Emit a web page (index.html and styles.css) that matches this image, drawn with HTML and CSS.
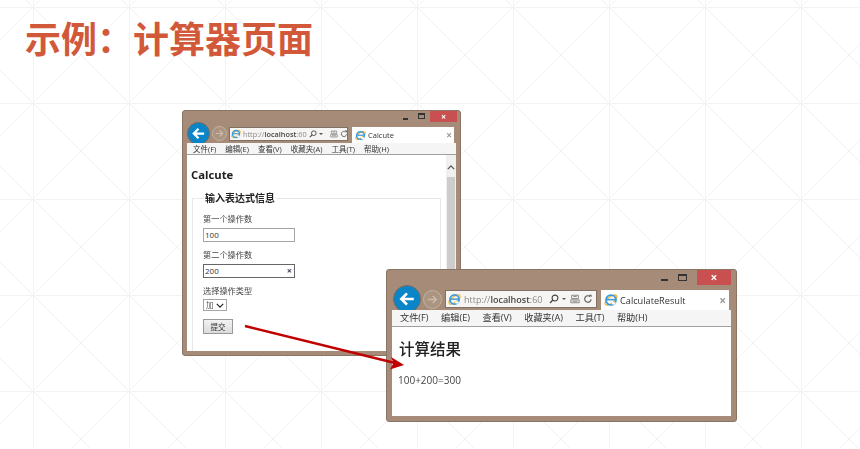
FILE: index.html
```html
<!DOCTYPE html>
<html lang="zh-CN">

<head>
    <meta charset="UTF-8" />
    <title>示例&#xFF1A;计算器页面</title>
    <link rel="stylesheet" href="styles.css">
</head>

<body>
    <h1 class="title">示例<span class="title-colon">&#xFF1A;</span>计算器页面</h1>

    <!-- Shared icon shapes -->
    <svg width="0" height="0" class="defs" aria-hidden="true">
        <symbol id="ie" viewBox="0 0 16 16">
            <ellipse cx="8" cy="8" rx="8" ry="3.6" transform="rotate(-38 8 8)" fill="none" stroke="#f2b632" stroke-width="1.5" />
            <circle cx="8" cy="8" r="5.6" fill="none" stroke="#3a9ad9" stroke-width="2.2" />
            <path d="M3.5 7.6h9" stroke="#3a9ad9" stroke-width="1.8" />
            <path d="M9 10.5h4.5l-1 2.5H9z" fill="#fff" />
        </symbol>
        <symbol id="arrow-left" viewBox="0 0 24 24">
            <path d="M21 12H5M12 4.5 4.5 12l7.5 7.5" fill="none" stroke="#fff" stroke-width="3.6" />
        </symbol>
        <symbol id="arrow-right" viewBox="0 0 24 24">
            <path d="M4 12h15M12.5 5.5 19 12l-6.500 6.500" fill="none" stroke="#cbbcae" stroke-width="2.6" />
        </symbol>
        <symbol id="search" viewBox="0 0 12 12">
            <circle cx="7.200" cy="4.800" r="3.500" fill="none" stroke="#444" stroke-width="1.300" />
            <path d="M4.700 7.300 1.200 10.800" stroke="#444" stroke-width="1.600" />
        </symbol>
        <symbol id="compat" viewBox="0 0 12 12">
            <path d="M2 1.500h8v4H2zM1 7h10v3.500H1zM4 3h4M3 8.700h6" fill="none" stroke="#777" stroke-width="1" />
        </symbol>
        <symbol id="refresh" viewBox="0 0 12 12">
            <path d="M9.800 6.500A3.900 3.900 0 1 1 8.500 3" fill="none" stroke="#555" stroke-width="1.300" />
            <path d="M7 .8h3.200V4z" fill="#555" />
        </symbol>
    </svg>

    <!-- Form window -->
    <section class="win win-form">
        <div class="win-caption">
            <span class="cap-min"></span>
            <span class="cap-max"></span>
            <span class="cap-close">×</span>
        </div>
        <div class="win-toolbar">
            <span class="nav-back"><svg><use href="#arrow-left" /></svg></span>
            <span class="nav-forward"><svg><use href="#arrow-right" /></svg></span>
            <div class="address">
                <svg class="ie"><use href="#ie" /></svg>
                <span class="url">http://<b>localhost</b>:60</span>
                <svg class="tool"><use href="#search" /></svg>
                <span class="caret"></span>
                <svg class="tool tool-compat"><use href="#compat" /></svg>
                <svg class="tool"><use href="#refresh" /></svg>
            </div>
            <div class="tab">
                <svg class="ie"><use href="#ie" /></svg>
                <span class="tab-name">Calcute</span>
                <span class="tab-close">×</span>
            </div>
        </div>
        <ul class="menu">
            <li>文件(F)</li>
            <li>编辑(E)</li>
            <li>查看(V)</li>
            <li>收藏夹(A)</li>
            <li>工具(T)</li>
            <li>帮助(H)</li>
        </ul>
        <div class="form-view">
            <div class="form-page">
                <h2 class="form-title">Calcute</h2>
                <fieldset class="form-box">
                    <legend>输入表达式信息</legend>
                    <label>第一个操作数</label>
                    <div class="field">100</div>
                    <label>第二个操作数</label>
                    <div class="field field-active">200<span class="field-clear">×</span></div>
                    <label>选择操作类型</label>
                    <div class="select">加<svg viewBox="0 0 10 6"><path d="M1 1l4 4 4-4" fill="none" stroke="#222" stroke-width="1.500" /></svg></div>
                    <button class="submit" type="button">提交</button>
                </fieldset>
            </div>
            <div class="scrollbar">
                <svg class="scroll-up" viewBox="0 0 10 6"><path d="M1 5l4-4 4 4" fill="none" stroke="#555" stroke-width="1.600" /></svg>
                <div class="scroll-thumb"></div>
            </div>
        </div>
    </section>

    <!-- Result window -->
    <section class="win win-result">
        <div class="win-caption">
            <span class="cap-min"></span>
            <span class="cap-max"></span>
            <span class="cap-close">×</span>
        </div>
        <div class="win-toolbar">
            <span class="nav-back"><svg><use href="#arrow-left" /></svg></span>
            <span class="nav-forward"><svg><use href="#arrow-right" /></svg></span>
            <div class="address">
                <svg class="ie"><use href="#ie" /></svg>
                <span class="url">http://<b>localhost</b>:60</span>
                <svg class="tool"><use href="#search" /></svg>
                <span class="caret"></span>
                <svg class="tool tool-compat"><use href="#compat" /></svg>
                <svg class="tool"><use href="#refresh" /></svg>
            </div>
            <div class="tab">
                <svg class="ie"><use href="#ie" /></svg>
                <span class="tab-name">CalculateResult</span>
                <span class="tab-close">×</span>
            </div>
        </div>
        <ul class="menu">
            <li>文件(F)</li>
            <li>编辑(E)</li>
            <li>查看(V)</li>
            <li>收藏夹(A)</li>
            <li>工具(T)</li>
            <li>帮助(H)</li>
        </ul>
        <div class="result-view">
            <h2 class="result-title">计算结果</h2>
            <p class="result-text">100+200=300</p>
        </div>
    </section>

    <svg class="link-arrow" width="860" height="449" viewBox="0 0 860 449" aria-hidden="true">
        <path d="M245 326 395 363" stroke="#c00000" stroke-width="2.500" fill="none" />
        <path d="M404 365 391 357 393.500 363 390 369.500z" fill="#c00000" />
    </svg>
</body>

</html>
```

FILE: styles.css
```css
:root {
    --frame: #a68c78;
    --frame-edge: #8a7565;
    --line: #f3f3f3;
    --text: #333;
    --close: #c95050;
}

* {
    box-sizing: border-box;
}

/* Slide background: a 96px square grid with an X in every square */
body {
    position: relative;
    width: 860px;
    height: 449px;
    margin: 0;
    overflow: hidden;
    font-family: "Open Sans", "Noto Sans CJK SC", sans-serif;
    color: var(--text);
    background-color: #fff;
    background-image:
        linear-gradient(to right, var(--line) 1px, transparent 1px),
        linear-gradient(to bottom, var(--line) 1px, transparent 1px),
        linear-gradient(45deg, transparent calc(50% - 0.6px), var(--line) 50%, transparent calc(50% + 0.6px)),
        linear-gradient(-45deg, transparent calc(50% - 0.6px), var(--line) 50%, transparent calc(50% + 0.6px));
    background-size: 96px 96px;
    background-position: 33px 7px;
}

.defs {
    position: absolute;
}

.title {
    margin: 0;
    padding: 11px 0 0 25px;
    font-family: "Noto Sans CJK SC", sans-serif;
    font-size: 36px;
    line-height: 52px;
    font-weight: 700;
    color: #d2583a;
}

.title-colon {
    font-family: "Noto Sans CJK TC", sans-serif;
}

/* Browser window */
.win {
    position: absolute;
    display: flex;
    flex-direction: column;
    background: var(--frame);
    border: 1px solid var(--frame-edge);
    border-radius: 3px;
    filter: blur(0.3px);
}

.win svg {
    display: block;
    width: 100%;
    height: 100%;
}

.win-caption {
    display: flex;
    align-items: flex-start;
    justify-content: flex-end;
}

.cap-min {
    background: #333;
}

.cap-max {
    border: 1px solid #333;
    border-top-width: 2px;
}

.cap-close {
    display: flex;
    align-items: center;
    justify-content: center;
    background: var(--close);
    color: #fff;
    font-weight: 700;
}

.win-toolbar {
    display: flex;
    align-items: flex-start;
}

.nav-back {
    flex: none;
    border-radius: 50%;
    background: #0a85c7;
    border: 1px solid #7a6a5c;
}

.nav-forward {
    flex: none;
    border-radius: 50%;
    border: 1px solid #c2b2a3;
    background: #ab9480;
}

.address {
    display: flex;
    align-items: center;
    background: #f7f5f3;
    border: 1px solid #7f7265;
    overflow: hidden;
}

.win .ie {
    flex: none;
}

.url {
    color: #8a8a8a;
    white-space: nowrap;
}

.url b {
    color: #444;
    font-weight: 600;
}

.win .tool {
    flex: none;
}

.caret {
    flex: none;
    width: 0;
    height: 0;
    border-style: solid;
    border-color: #555 transparent transparent;
}

.tab {
    display: flex;
    align-items: center;
    background: #fff;
}

.tab-name {
    flex: 1;
    color: #333;
    white-space: nowrap;
}

.tab-close {
    color: #999;
    font-weight: 700;
}

.menu {
    display: flex;
    margin: 0;
    list-style: none;
    background: #f5f5f5;
    border-bottom: 1px solid #a0a0a0;
    color: #333;
}

/* Form window sizes */
.win-form {
    left: 182px;
    top: 110px;
    width: 279px;
    height: 246px;
    padding: 0 4px 4px;
}

.win-form .win-caption {
    height: 12px;
}

.win-form .cap-min {
    width: 5px;
    height: 2px;
    margin: 7px 10px 0 0;
}

.win-form .cap-max {
    width: 7px;
    height: 6px;
    margin: 2px 5px 0 0;
}

.win-form .cap-close {
    width: 27px;
    height: 11px;
    margin-right: -1px;
    font-size: 9px;
}

.win-form .win-toolbar {
    height: 20px;
    margin-left: 0;
}

.win-form .nav-back {
    width: 23px;
    height: 23px;
    margin-top: -1px;
    padding: 3px;
}

.win-form .nav-forward {
    width: 15px;
    height: 15px;
    margin: 3px 0 0 2px;
    padding: 1px;
}

.win-form .address {
    width: 119px;
    height: 14px;
    margin: 4px 0 0 2px;
    padding: 0 1px;
    gap: 2px;
    font-size: 7.300px;
}

.win-form .address .ie {
    width: 10px;
    height: 10px;
}

.win-form .tool {
    width: 8px;
    height: 8px;
}

.win-form .tool-compat {
    margin-left: 5px;
}

.win-form .url {
    flex: 0 0 64px;
    min-width: 0;
}

.win-form .caret {
    border-width: 2px 2px 0;
}

.win-form .tab {
    width: 102px;
    height: 16px;
    margin: 4px 0 0 4px;
    padding: 0 2px 0 3px;
    gap: 2px;
    font-size: 7.500px;
}

.win-form .tab .ie {
    width: 11px;
    height: 11px;
}

.win-form .tab-close {
    font-size: 10px;
}

.win-form .menu {
    height: 12px;
    margin: 0;
    padding: 0 0 0 6px;
    gap: 9px;
    font-size: 7.500px;
    line-height: 12px;
}

.form-view {
    display: flex;
    flex: 1;
    min-height: 0;
    background: #fff;
    overflow: hidden;
}

.form-page {
    flex: 1;
    min-width: 0;
    padding: 12px 5px 0 4px;
}

.form-title {
    margin: 0 0 10px;
    font-size: 11.300px;
    line-height: 16px;
    font-weight: 700;
    color: #222;
}

.form-box {
    height: 200px;
    margin: 0 0 0 1px;
    padding: 9px 10px 0;
    border: 1px solid #e8e8e8;
}

.form-box legend {
    margin-left: 1px;
    padding: 0 1px;
    font-size: 10px;
    line-height: 11px;
    font-weight: 700;
    color: #222;
}

.form-box label {
    display: block;
    height: 14px;
    font-size: 8.200px;
    line-height: 12px;
    color: #444;
}

.field {
    position: relative;
    width: 92px;
    height: 14px;
    margin: 1px 0 7px;
    padding-left: 1px;
    border: 1px solid #a5a5a5;
    font-size: 8px;
    line-height: 12px;
    color: #333;
    background: #fff;
}

.field-active {
    border-color: #666;
}

.field-clear {
    position: absolute;
    right: 2px;
    top: 0;
    font-size: 9px;
    font-weight: 700;
    color: #444;
}

.select {
    display: flex;
    align-items: center;
    justify-content: space-between;
    width: 24px;
    height: 12px;
    margin: 0 0 8px;
    padding: 0 2px;
    border: 1px solid #a5a5a5;
    font-size: 7.500px;
    line-height: 10px;
    color: #555;
}

.win .select svg {
    width: 8px;
    height: 5px;
}

.submit {
    display: block;
    width: 30px;
    height: 15px;
    padding: 0;
    border: 1px solid #999;
    background: linear-gradient(#f2f2f2, #dcdcdc);
    font-family: inherit;
    font-size: 7.500px;
    line-height: 12px;
    color: #333;
}

.scrollbar {
    flex: none;
    width: 10px;
    background: #f0f0f0;
    padding: 10px 1px 0;
}

.win .scroll-up {
    width: 8px;
    height: 5px;
    margin: 0 auto 7px;
}

.scroll-thumb {
    height: 180px;
    background: #cdcdcd;
}

/* Result window sizes */
.win-result {
    left: 386px;
    top: 269px;
    width: 351px;
    height: 153px;
    padding: 0 5px 5px;
}

.win-result .win-caption {
    height: 16px;
}

.win-result .cap-min {
    width: 7px;
    height: 2px;
    margin: 9px 10px 0 0;
}

.win-result .cap-max {
    width: 9px;
    height: 7px;
    margin: 4px 10px 0 0;
}

.win-result .cap-close {
    width: 34px;
    height: 15px;
    font-size: 12px;
}

.win-result .win-toolbar {
    height: 24px;
    margin-left: 1px;
}

.win-result .nav-back {
    width: 28px;
    height: 28px;
    margin-top: -1px;
    padding: 4px;
}

.win-result .nav-forward {
    width: 19px;
    height: 19px;
    margin: 4px 0 0 2px;
    padding: 2px;
}

.win-result .address {
    width: 152px;
    height: 18px;
    margin: 4px 0 0 3px;
    padding: 0 2px;
    gap: 3px;
    font-size: 9px;
}

.win-result .address .ie {
    width: 13px;
    height: 13px;
}

.win-result .tool {
    width: 10px;
    height: 10px;
}

.win-result .tool-compat {
    margin-left: 1px;
}

.win-result .url {
    flex: 0 0 82px;
    min-width: 0;
}

.win-result .caret {
    border-width: 2.500px 2.500px 0;
}

.win-result .tab {
    width: 128px;
    height: 20px;
    margin: 4px 0 0 4px;
    padding: 0 3px;
    gap: 2px;
    font-size: 9.200px;
}

.win-result .tab .ie {
    width: 14px;
    height: 14px;
}

.win-result .tab-close {
    font-size: 12px;
}

.win-result .menu {
    height: 17px;
    padding: 0 0 0 8px;
    gap: 12.500px;
    font-size: 9.200px;
    line-height: 16px;
}

.result-view {
    flex: 1;
    padding: 10px 7px 0;
    background: #fff;
}

.result-title {
    margin: 0 0 12px;
    font-size: 15.500px;
    line-height: 24px;
    font-weight: 500;
    color: #222;
}

.result-text {
    margin: 0 0 0 -1px;
    font-size: 10px;
    line-height: 14px;
    color: #444;
}

/* Red arrow between the windows */
.link-arrow {
    position: absolute;
    left: 0;
    top: 0;
}
```
